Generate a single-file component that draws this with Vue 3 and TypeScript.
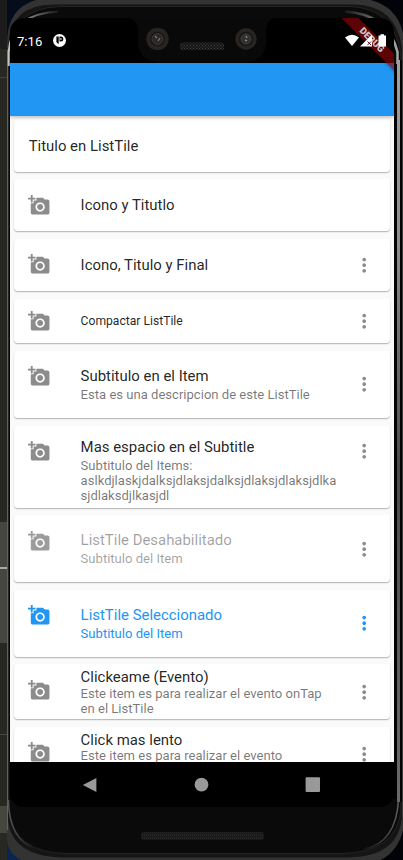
<script setup lang="ts">
type Variant = 'single' | 'compact' | 'double' | 'triple' | 'tight'
type State = 'normal' | 'disabled' | 'selected'

interface Tile {
  title: string
  lines?: string[]
  variant: Variant
  state?: State
  leading?: boolean
  trailing?: boolean
}

const tiles: Tile[] = [
  { title: 'Titulo en ListTile', variant: 'single' },
  { title: 'Icono y Titutlo', variant: 'single', leading: true },
  { title: 'Icono, Titulo y Final', variant: 'single', leading: true, trailing: true },
  { title: 'Compactar ListTile', variant: 'compact', leading: true, trailing: true },
  { title: 'Subtitulo en el Item', lines: ['Esta es una descripcion de este ListTile'], variant: 'double', leading: true, trailing: true },
  {
    title: 'Mas espacio en el Subtitle',
    lines: ['Subtitulo del Items:', 'aslkdjlaskjdalksjdlaksjdalksjdlaksjdlaksjdlka', 'sjdlaksdjlkasjdl'],
    variant: 'triple', leading: true, trailing: true,
  },
  { title: 'ListTile Desahabilitado', lines: ['Subtitulo del Item'], variant: 'double', state: 'disabled', leading: true, trailing: true },
  { title: 'ListTile Seleccionado', lines: ['Subtitulo del Item'], variant: 'double', state: 'selected', leading: true, trailing: true },
  { title: 'Clickeame (Evento)', lines: ['Este item es para realizar el evento onTap', 'en el ListTile'], variant: 'tight', leading: true, trailing: true },
  { title: 'Click mas lento', lines: ['Este item es para realizar el evento'], variant: 'tight', leading: true, trailing: true },
]
</script>

<template>
  <main class="stage">
    <svg class="shell" viewBox="0 0 403 860" aria-hidden="true">
      <defs>
        <linearGradient id="gl" x1="0" y1="0" x2="1" y2="0">
          <stop offset="0" stop-color="#c4c4c4" />
          <stop offset="1" stop-color="#1a1a1a" />
        </linearGradient>
        <linearGradient id="gr" x1="0" y1="0" x2="1" y2="0">
          <stop offset="0" stop-color="#1a1a1a" />
          <stop offset="1" stop-color="#a8a8a8" />
        </linearGradient>
        <linearGradient id="side" x1="0" y1="0" x2="0" y2="1">
          <stop offset="0" stop-color="#a0a0a0" />
          <stop offset="0.25" stop-color="#8c8c8c" />
          <stop offset="0.55" stop-color="#4a4a4a" />
          <stop offset="1" stop-color="#6a6a6a" />
        </linearGradient>
        <linearGradient id="bl" x1="0" y1="0" x2="1" y2="0">
          <stop offset="0" stop-color="#555" />
          <stop offset="1" stop-color="#111" />
        </linearGradient>
        <linearGradient id="br" x1="0" y1="0" x2="1" y2="0">
          <stop offset="0" stop-color="#111" />
          <stop offset="1" stop-color="#606060" />
        </linearGradient>
        <pattern id="mesh" width="3" height="3" patternUnits="userSpaceOnUse">
          <rect width="3" height="3" fill="#141414" />
          <path d="M0 0h1v1h-1zM1.500 1.500h1v1h-1z" fill="#454545" />
        </pattern>
        <pattern id="grille" width="2" height="3" patternUnits="userSpaceOnUse">
          <rect width="2" height="3" fill="#191919" />
          <rect width="1" height="2" fill="#262626" />
        </pattern>
      </defs>
      <rect width="403" height="860" fill="#020308" />
      <rect width="7" height="49" fill="#1b1c1b" />
      <rect y="49" width="7" height="811" fill="#272822" />
      <rect y="77" width="7" height="1" fill="#414239" />
      <rect y="522" width="7" height="121" fill="#45463f" />
      <rect y="567" width="7" height="2" fill="#a7a7a3" />
      <rect y="734" width="7" height="1" fill="#464740" />
      <rect y="806" width="7" height="27" fill="#45463d" />
      <path d="M7 0h40v40H7z" fill="#050d1c" />
      <path d="M7 830h30v30H7z" fill="#0b2450" />
      <path d="M7 44Q7 0 50-2H356Q403 0 405 48V815Q403 867 347 867H62Q7 867 7 838Z" fill="#333" />
      <path d="M8 46Q10 5 53 4.500H354Q396 5 402 48V815Q400 858 345 857.500H64Q12 857 8 820Z" fill="#151515" />
      <path d="M8.500 56Q10 8 60 6.500H350Q395 8 401 56V810Q397 853 340 853.500H67Q14 853 8.500 810Z" fill="#0a0a0a" stroke="#242424" />
      <path d="M7.500 50V830" stroke="#606060" />
      <path d="M8.700 66V52Q11 14 58 11.500" fill="none" stroke="url(#gl)" stroke-width="2" />
      <path d="M345 11.500Q388 14 397.500 52V66" fill="none" stroke="url(#gr)" stroke-width="2.500" />
      <rect x="394" y="64" width="3" height="735" fill="#020202" />
      <rect x="397" y="60" width="3" height="742" fill="url(#side)" />
      <rect x="400" y="60" width="2" height="742" fill="#050505" />
      <rect x="402" y="40" width="1" height="778" fill="#3b3b3b" />
      <path d="M398.500 800Q396 843 364 849" fill="none" stroke="url(#br)" stroke-width="1.500" />
      <path d="M8.500 800Q9 841 37 849" fill="none" stroke="url(#bl)" stroke-width="1.500" />
      <rect x="141" y="832" width="123" height="8" rx="3" fill="url(#grille)" />
    </svg>

    <div class="screen">
      <header class="status">
        <span class="clock">7:16</span>
        <svg class="pocket" viewBox="0 0 13 13">
          <circle cx="6.500" cy="6.500" r="6.500" fill="#fff" />
          <path d="M3.400 2.600H5.700V9.900Q3.400 9.500 3.400 7.500Z" fill="#000" />
          <path d="M6.500 2.600H7.800A2.500 2.500 0 0 1 7.800 7.600H6.500Z" fill="#000" />
          <rect x="7.300" y="4.200" width="1.200" height="1.600" fill="#fff" />
        </svg>
        <svg class="notch" viewBox="0 0 144 46">
          <path d="M0 0H144Q136 3 136 14V24Q135 44 114 44.500H30Q9 44 8 24V14Q8 3 0 0Z" fill="#090909" />
          <circle cx="27.500" cy="21" r="11.200" fill="#29241f" />
          <circle cx="27.500" cy="21" r="7.300" fill="#151516" />
          <circle cx="27.500" cy="21" r="5.500" fill="#29282a" stroke="#3d3b3a" />
          <path d="M25 18l2 2M28 23l2-3" stroke="#88736c" stroke-width="1.300" />
          <circle cx="116" cy="21" r="10.700" fill="#29241f" />
          <circle cx="116" cy="21" r="7.300" fill="#171718" />
          <circle cx="116" cy="21" r="5" fill="#303030" stroke="#414141" />
          <path d="M116 18l1 2M115 22l2 1" stroke="#929292" stroke-width="1.300" />
          <rect x="50" y="24.500" width="44" height="7.500" rx="2.500" fill="url(#mesh)" />
        </svg>
        <svg class="signals" viewBox="0 0 44 14">
          <path d="M0 3.500Q7 -1.900 14 3.500L7 12Z" fill="#fff" />
          <path d="M15 12.500L27 .500V12.500Z" fill="#fff" />
          <path d="M22.500 7.500l3.500 3.500m0-3.500l-3.500 3.500" stroke="#5a1010" stroke-width="1" />
          <path d="M33.500 1.500H35.500V.300h3.500V1.500H41V12.500H33.500Z" fill="#fff" />
        </svg>
      </header>
      <div class="appbar"></div>

      <section class="list">
        <article v-for="tile in tiles" :key="tile.title" class="tile" :class="[tile.variant, tile.state ?? 'normal']">
          <svg v-if="tile.leading" class="icon lead" viewBox="0 0 24 24">
            <path d="M3 4V1h2v3h3v2H5v3H3V6H0V4h3zm3 6V7h3V4h7l1.830 2H21c1.100 0 2 .9 2 2v12c0 1.100-.9 2-2 2H5c-1.100 0-2-.9-2-2V10h3zm7 9c2.760 0 5-2.240 5-5s-2.240-5-5-5-5 2.240-5 5 2.240 5 5 5zm-3.200-5c0 1.770 1.430 3.200 3.200 3.200s3.200-1.430 3.200-3.200-1.430-3.200-3.200-3.200-3.200 1.430-3.200 3.200z" />
          </svg>
          <div class="copy">
            <div class="title">{{ tile.title }}</div>
            <div v-if="tile.lines" class="subtitle">
              <div v-for="line in tile.lines" :key="line">{{ line }}</div>
            </div>
          </div>
          <svg v-if="tile.trailing" class="icon more" viewBox="0 0 24 24">
            <path d="M12 8c1.100 0 2-.9 2-2s-.9-2-2-2-2 .9-2 2 .9 2 2 2zm0 2c-1.100 0-2 .9-2 2s.9 2 2 2 2-.9 2-2-.9-2-2-2zm0 6c-1.100 0-2 .9-2 2s.9 2 2 2 2-.9 2-2-.9-2-2-2z" />
          </svg>
        </article>
      </section>

      <nav class="navbar">
        <svg viewBox="0 0 16 16"><path d="M14.400 .900V15.100L.800 8Z" /></svg>
        <svg viewBox="0 0 16 16"><circle cx="8.500" cy="7.700" r="6.900" /></svg>
        <svg viewBox="0 0 16 16"><rect x=".600" y=".300" width="14.400" height="14.600" rx="1" /></svg>
      </nav>

      <div class="debug"><span>DEBUG</span></div>
    </div>
  </main>
</template>

<style>
body {
  background: #000;
}
</style>

<style scoped>
.stage {
  position: relative;
  box-sizing: border-box;
  width: 403px;
  height: 860px;
  padding: 18px 9px 53px 10px;
  overflow: hidden;
  font-family: Roboto, sans-serif;
}
.shell {
  position: absolute;
  inset: 0;
  width: 403px;
  height: 860px;
}
.screen {
  position: relative;
  display: flex;
  flex-direction: column;
  width: 384px;
  height: 789px;
  overflow: hidden;
  border-radius: 14px;
  background: #000;
}
.status {
  position: relative;
  display: flex;
  align-items: center;
  flex: none;
  box-sizing: border-box;
  height: 45.400px;
  padding: 1px 5px 0 7px;
  color: #fff;
}
.clock {
  font-size: 13.100px;
  width: 36px;
}
.pocket {
  width: 13px;
  height: 13px;
  margin-top: -1px;
}
.notch {
  position: absolute;
  left: 120px;
  top: 0;
  width: 144px;
  height: 46px;
}
.signals {
  position: relative;
  z-index: 2;
  width: 44px;
  height: 14px;
  margin-left: auto;
  margin-right: -0.400px;
}
.appbar {
  position: relative;
  flex: none;
  height: 52.300px;
  background: #2196f3;
  box-shadow: 0 1px 4px rgba(0, 0, 0, 0.3);
}
.list {
  display: flex;
  flex-direction: column;
  flex: 1;
  min-height: 0;
  gap: 7.470px;
  padding: 3.730px 3.730px 0;
  overflow: hidden;
  background: #fafafa;
}
.tile {
  display: flex;
  align-items: flex-start;
  flex: none;
  box-sizing: border-box;
  padding: 0 14.930px;
  border-radius: 3.700px;
  background: #fff;
  color: rgba(0, 0, 0, 0.87);
  box-shadow: 0 1px 1px rgba(0, 0, 0, 0.18), 0 1px 2px rgba(0, 0, 0, 0.13);
}
.icon {
  flex: none;
  width: 22.400px;
  height: 22.400px;
  fill: #8c8c8c;
}
.lead {
  margin: 14.500px 30.270px 0 -0.700px;
}
.more {
  align-self: center;
  margin: 0;
}
.copy {
  flex: 1;
  min-width: 0;
  white-space: nowrap;
}
.title {
  font-size: 14.930px;
  line-height: 17.500px;
}
.subtitle {
  font-size: 13.070px;
  line-height: 14.930px;
  color: rgba(0, 0, 0, 0.54);
}
.single {
  height: 52.270px;
}
.single .copy {
  padding-top: 18.100px;
}
.compact {
  height: 44.800px;
}
.compact .copy {
  padding-top: 14px;
}
.compact .title {
  font-size: 12.130px;
  line-height: 16px;
}
.compact .lead {
  margin-top: 11.100px;
}
.double {
  height: 67.200px;
}
.double .copy {
  padding-top: 17px;
}
.double .subtitle {
  padding-top: 2.300px;
}
.triple {
  height: 82.130px;
}
.triple .copy {
  padding-top: 13.300px;
}
.triple .subtitle {
  padding-top: 2.500px;
}
.triple .more {
  align-self: flex-start;
  margin-top: 14.930px;
}
.tight {
  height: 55px;
}
.tight .copy {
  padding-top: 4.700px;
}
.tight .subtitle {
  padding-top: 0.300px;
}
.disabled .title,
.disabled .subtitle {
  color: rgba(0, 0, 0, 0.38);
}
.disabled .lead {
  fill: #9c9c9c;
}
.selected .title,
.selected .subtitle {
  color: #2196f3;
}
.selected .icon {
  fill: #2196f3;
}
.navbar {
  display: flex;
  align-items: center;
  justify-content: space-between;
  flex: none;
  box-sizing: border-box;
  height: 45px;
  padding: 0 73.500px 0 72px;
  background: #000;
}
.navbar svg {
  width: 16px;
  height: 16px;
  fill: #999;
}
.debug {
  position: absolute;
  top: 16px;
  left: 316.700px;
  width: 90px;
  height: 11.600px;
  background: rgba(140, 5, 8, 0.66);
  box-shadow: 0 0 4px rgba(0, 0, 0, 0.4);
  transform: rotate(45deg);
  text-align: center;
}
.debug span {
  display: block;
  color: #d0c8c8;
  font-size: 9.500px;
  font-weight: 900;
  line-height: 11.600px;
}
</style>
